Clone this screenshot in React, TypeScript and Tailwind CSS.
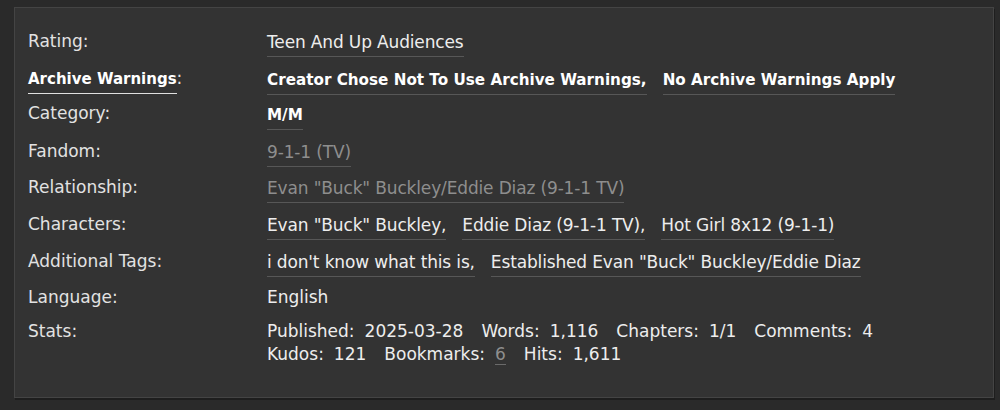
import React from "react";

type Tag = { text: string; dim?: boolean };

interface MetaRow {
  label: string;
  tags: Tag[];
  bold?: boolean;
  labelLink?: boolean;
  h: string;
}

const rows: MetaRow[] = [
  { label: "Rating", h: "h-[37px]", tags: [{ text: "Teen And Up Audiences" }] },
  {
    label: "Archive Warnings",
    h: "h-[35px]",
    labelLink: true,
    bold: true,
    tags: [{ text: "Creator Chose Not To Use Archive Warnings" }, { text: "No Archive Warnings Apply" }],
  },
  { label: "Category", h: "h-[38px]", bold: true, tags: [{ text: "M/M" }] },
  { label: "Fandom", h: "h-[36px]", tags: [{ text: "9-1-1 (TV)", dim: true }] },
  { label: "Relationship", h: "h-[37px]", tags: [{ text: 'Evan "Buck" Buckley/Eddie Diaz (9-1-1 TV)', dim: true }] },
  {
    label: "Characters",
    h: "h-[37px]",
    tags: [{ text: 'Evan "Buck" Buckley' }, { text: "Eddie Diaz (9-1-1 TV)" }, { text: "Hot Girl 8x12 (9-1-1)" }],
  },
  {
    label: "Additional Tags",
    h: "h-[36px]",
    tags: [{ text: "i don't know what this is" }, { text: 'Established Evan "Buck" Buckley/Eddie Diaz' }],
  },
];

function TagList({ tags, bold }: { tags: Tag[]; bold?: boolean }) {
  return (
    <ul className="flex flex-wrap gap-x-[16px]">
      {tags.map((t, i) => (
        <li key={t.text}>
          <a
            className={`inline-block border-b border-[#575757] pb-[4px] ${
              bold ? "text-[15.2px] leading-[20px] font-bold text-white" : "tracking-[-0.15px] leading-[20px]"
            } ${t.dim ? "text-[#8e8e8e]" : bold ? "" : "text-[#ededed]"}`}
          >
            {t.text}
            {i < tags.length - 1 ? "," : ""}
          </a>
        </li>
      ))}
    </ul>
  );
}

function Stat({ label, value, dim }: { label: string; value: string; dim?: boolean }) {
  return (
    <span className="mr-[18px] whitespace-nowrap">
      {label}:
      {dim ? (
        <span className="ml-[10px] inline-block border-b border-[#6a6a6a] leading-[19px] text-[#8e8e8e]">{value}</span>
      ) : (
        <span className="ml-[10px]">{value}</span>
      )}
    </span>
  );
}

export default function App() {
  return (
    <div
      className="h-[410px] w-[1000px] bg-[#2a2a2a] px-[14px] pt-[7px] text-[17px] text-[#e6e6e6]"
      style={{ fontFamily: '"DejaVu Sans", "Liberation Sans", sans-serif' }}
    >
      <dl className="h-[391px] w-[980px] border border-[#444] bg-[#333] pl-[13px] pt-[23px] shadow-[1px_2px_0_#1e1e1e]">
        {rows.map((r) => (
          <div key={r.label} className={`grid grid-cols-[239px_1fr] ${r.h}`}>
            <dt className="leading-[20px] text-[#e2e2e2]">
              {r.labelLink ? (
                <>
                  <a className="inline-block border-b border-[#e0e0e0] pb-[4px] text-[15px] font-bold text-white">
                    {r.label}
                  </a>
                  :
                </>
              ) : (
                <>{r.label}:</>
              )}
            </dt>
            <dd className="-mt-[1px]">
              <TagList tags={r.tags} bold={r.bold} />
            </dd>
          </div>
        ))}
        <div className="grid h-[33px] grid-cols-[239px_1fr] leading-[20px]">
          <dt className="text-[#e2e2e2]">Language:</dt>
          <dd className="text-[#ededed]">English</dd>
        </div>
        <div className="grid grid-cols-[239px_1fr]">
          <dt className="leading-[23px] text-[#e2e2e2]">Stats:</dt>
          <dd className="leading-[23px] text-[#ededed]">
            <div>
              <Stat label="Published" value="2025-03-28" />
              <Stat label="Words" value="1,116" />
              <Stat label="Chapters" value="1/1" />
              <Stat label="Comments" value="4" />
            </div>
            <div>
              <Stat label="Kudos" value="121" />
              <Stat label="Bookmarks" value="6" dim />
              <Stat label="Hits" value="1,611" />
            </div>
          </dd>
        </div>
      </dl>
    </div>
  );
}
